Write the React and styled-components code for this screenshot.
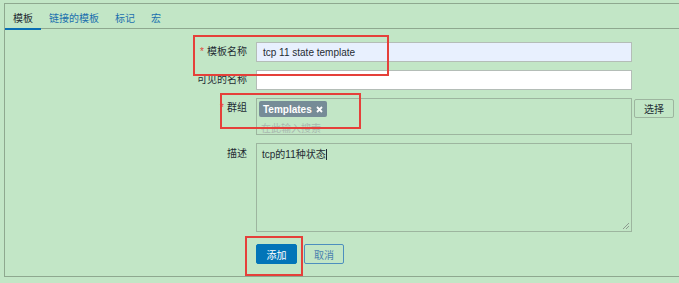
import React from 'react';
import styled, { createGlobalStyle } from 'styled-components';

const Global = createGlobalStyle`
  html, body {
    margin: 0;
    padding: 0;
    background: #c2e6c6;
    overflow: hidden;
  }
  body {
    font-family: "Liberation Sans", "Noto Sans CJK SC", Arial, sans-serif;
    font-size: 10px;
    color: #1f2c33;
  }
`;

const Page = styled.div`
  position: relative;
  width: 679px;
  height: 283px;
  padding: 3px 0 0 4px;
  box-sizing: border-box;
`;

// panel continues past the right edge, so it has no right border
const Panel = styled.div`
  border-top: 1px solid #8ea88f;
  border-left: 1px solid #8ea88f;
  border-bottom: 1px solid #8ea88f;
`;

const TabBar = styled.div`
  display: flex;
  height: 24px;
  border-bottom: 1px solid #8ea88f;
`;

const Tab = styled.div`
  display: flex;
  align-items: center;
  padding: 2px 8px 0;
  height: 22px;
  color: ${p => (p.$active ? '#1f2c33' : '#1a6fae')};
  border-bottom: 2px solid ${p => (p.$active ? '#0a6eb4' : 'transparent')};
`;

const Form = styled.div`
  display: grid;
  grid-template-columns: 242px 376px 40px;
  column-gap: 9px;
  row-gap: 8px;
  padding: 13px 0 12px;
  align-items: start;
`;

const Label = styled.div`
  text-align: right;
  padding-top: ${p => p.$top || 4}px;
  line-height: 12px;
  white-space: nowrap;
  color: #1f2c33;
`;

const Star = styled.span`
  color: #e0473a;
  margin-right: 3px;
`;

const Input = styled.div`
  grid-column: 2;
  box-sizing: border-box;
  height: 20px;
  border: 1px solid #b4bdb7;
  background: ${p => p.$bg || '#ffffff'};
  padding: 0 6px;
  display: flex;
  align-items: center;
  font-size: 10px;
`;

const GroupBox = styled.div`
  box-sizing: border-box;
  height: 37px;
  border: 1px solid #9db59f;
  padding: 2px 2px 0;
`;

const TagItem = styled.span`
  display: inline-flex;
  align-items: center;
  gap: 4px;
  height: 16px;
  padding: 0 4px 0 4px;
  background: #768c97;
  color: #ffffff;
  font-weight: bold;
  border-radius: 2px;
`;

const Placeholder = styled.div`
  color: #a9b7ae;
  padding: 3px 0 0 2px;
`;

const SelectButton = styled.button`
  margin-left: -7px;
  margin-top: 1px;
  width: 40px;
  height: 19px;
  border: 1px solid #9db59f;
  border-radius: 2px;
  background: transparent;
  font: inherit;
  color: #1f2c33;
  padding: 0;
`;

const TextArea = styled.div`
  position: relative;
  grid-column: 2;
  box-sizing: border-box;
  height: 89px;
  border: 1px solid #9db59f;
  padding: 5px 5px;
  line-height: 12px;
`;

const Caret = styled.span`
  display: inline-block;
  width: 1px;
  height: 11px;
  background: #1f2c33;
  vertical-align: -2px;
`;

const Grip = styled.svg`
  position: absolute;
  right: 1px;
  bottom: 1px;
`;

const Actions = styled.div`
  grid-column: 2;
  display: flex;
  gap: 7px;
  margin-top: 4px;
`;

const Button = styled.button`
  box-sizing: border-box;
  width: ${p => p.$w}px;
  height: 20px;
  border-radius: 2px;
  font: inherit;
  padding: 0;
  border: 1px solid ${p => (p.$primary ? '#0275b8' : '#4d8fbe')};
  background: ${p => (p.$primary ? '#0275b8' : 'transparent')};
  color: ${p => (p.$primary ? '#ffffff' : '#4a7fae')};
`;

const Mark = styled.div`
  position: absolute;
  box-sizing: border-box;
  border: 2px solid #e5403a;
  left: ${p => p.$x}px;
  top: ${p => p.$y}px;
  width: ${p => p.$w}px;
  height: ${p => p.$h}px;
  pointer-events: none;
`;

export default function App() {
  return (
    <>
      <Global />
      <Page>
        <Panel>
          <TabBar>
            <Tab $active>模板</Tab>
            <Tab>链接的模板</Tab>
            <Tab>标记</Tab>
            <Tab>宏</Tab>
          </TabBar>
          <Form>
            <Label><Star>*</Star>模板名称</Label>
            <Input $bg="#e8f0fe">tcp 11 state template</Input>
            <span />

            <Label>可见的名称</Label>
            <Input />
            <span />

            <Label><Star>*</Star>群组</Label>
            <GroupBox>
              <TagItem>
                Templates
                <svg width="7" height="7" viewBox="0 0 7 7">
                  <path d="M1 1 L6 6 M6 1 L1 6" stroke="#fff" strokeWidth="1.8" />
                </svg>
              </TagItem>
              <Placeholder>在此输入搜索</Placeholder>
            </GroupBox>
            <SelectButton>选择</SelectButton>

            <Label $top={5}>描述</Label>
            <TextArea>
              tcp的11种状态<Caret />
              <Grip width="8" height="8" viewBox="0 0 8 8">
                <path d="M7 1 L1 7 M7 4 L4 7" stroke="#8d9a8f" strokeWidth="1" />
              </Grip>
            </TextArea>
            <span />

            <Actions>
              <Button $primary $w={41}>添加</Button>
              <Button $w={40}>取消</Button>
            </Actions>
          </Form>
        </Panel>
        <Mark $x={193} $y={35} $w={196} $h={41} />
        <Mark $x={220} $y={93} $w={141} $h={36} />
        <Mark $x={245} $y={236} $w={58} $h={40} />
      </Page>
    </>
  );
}
